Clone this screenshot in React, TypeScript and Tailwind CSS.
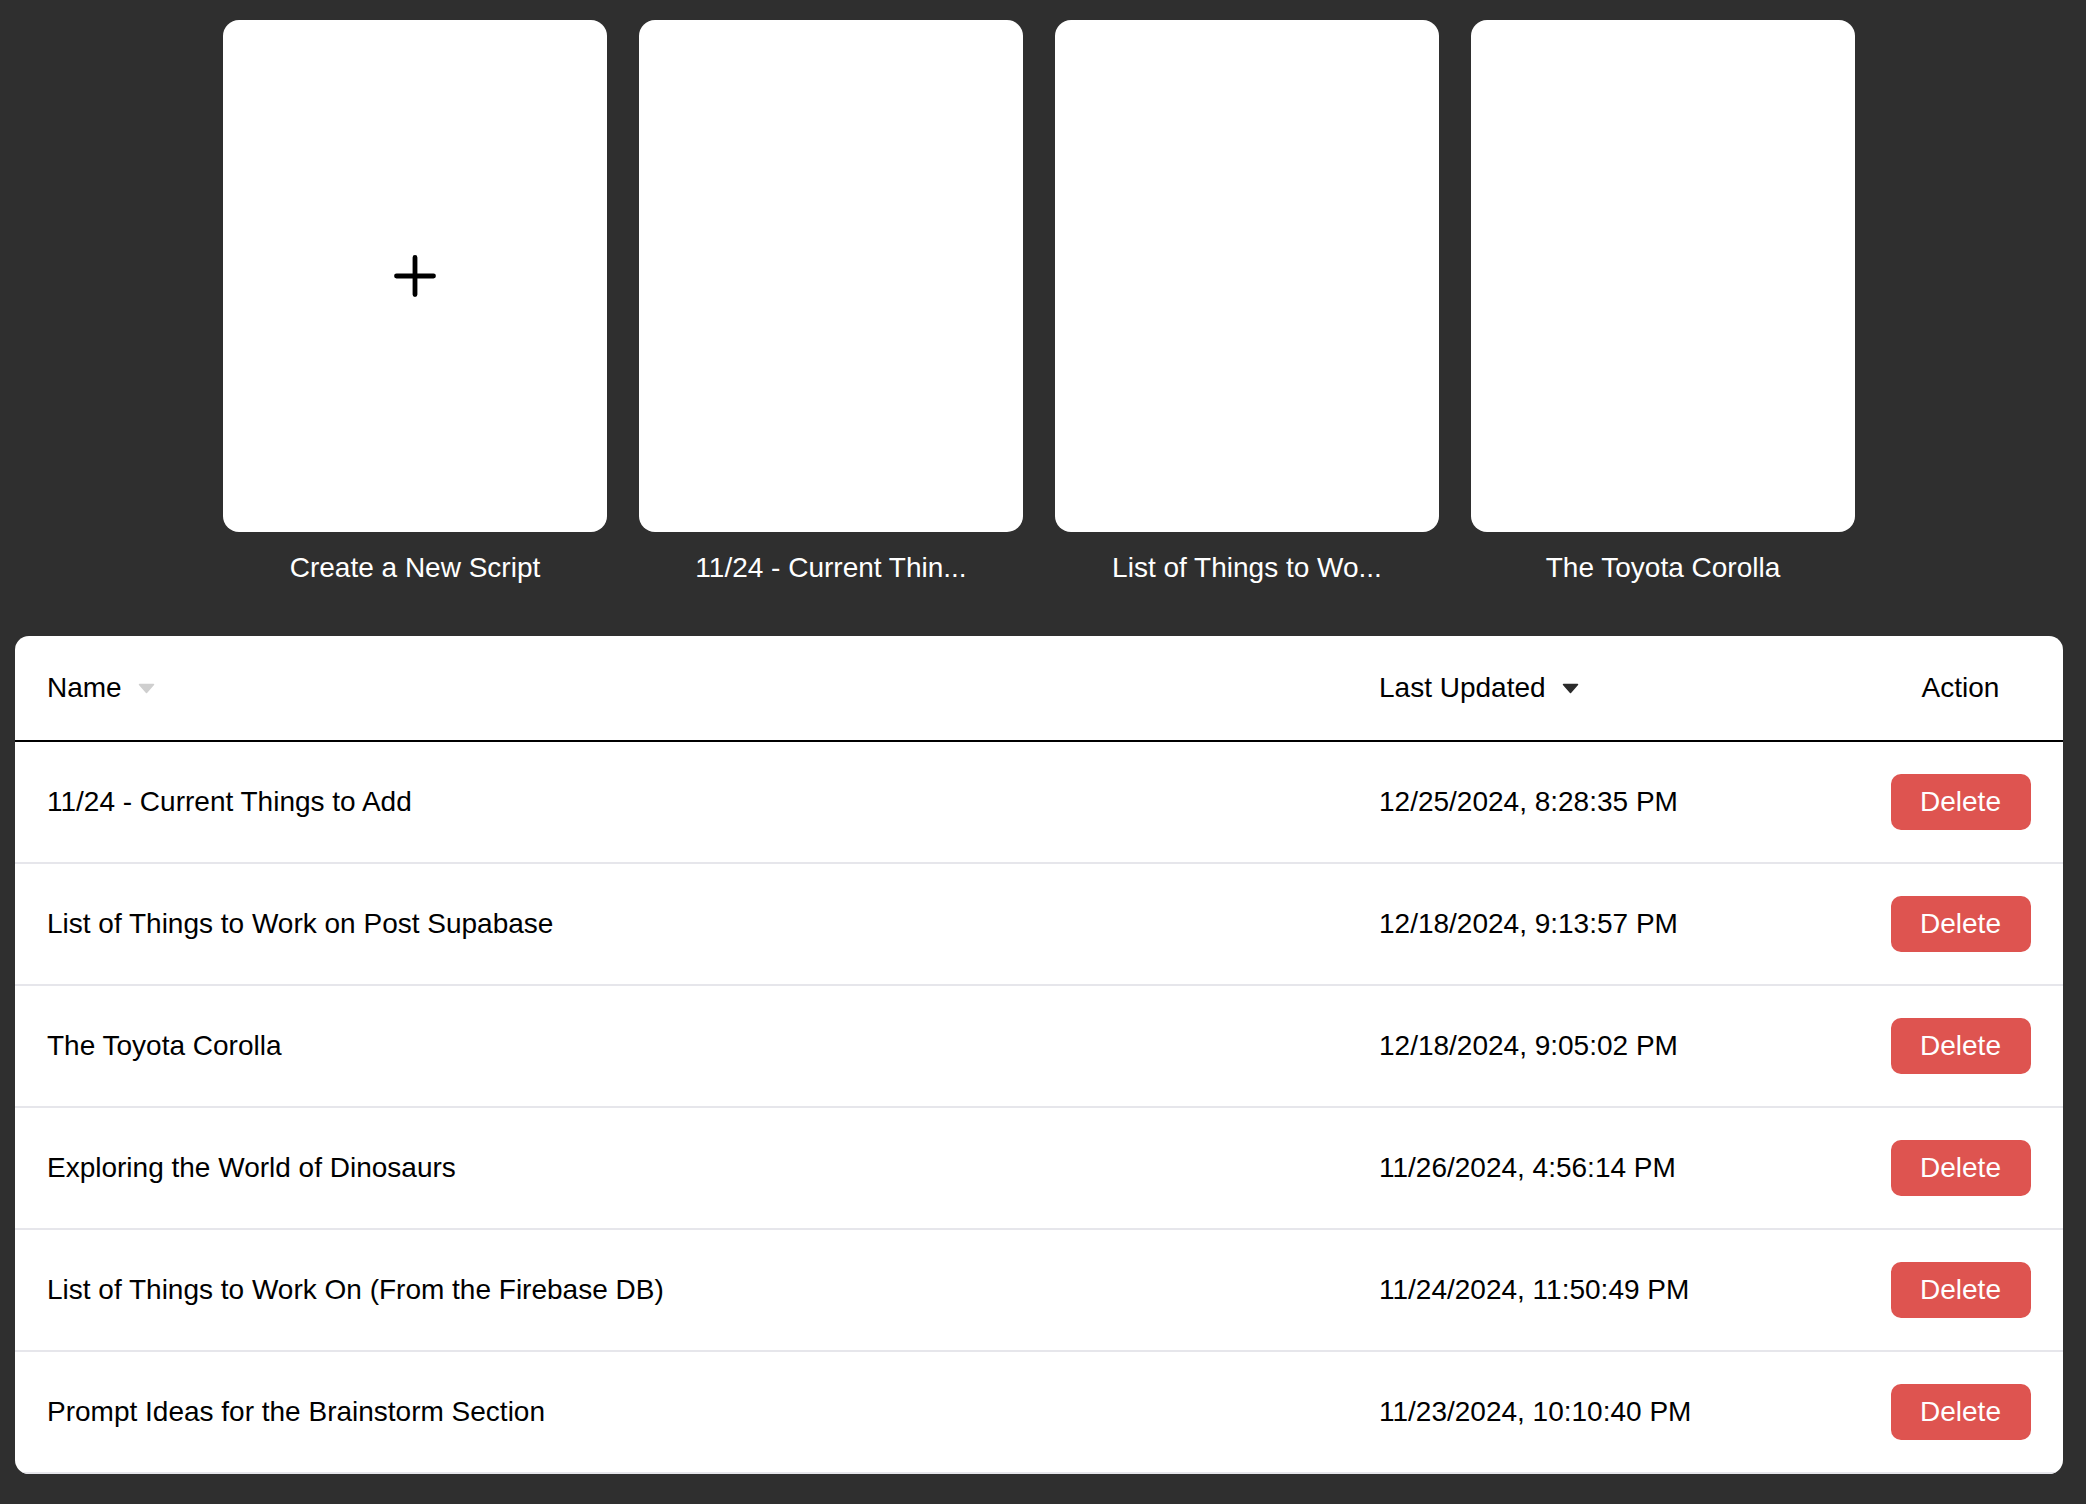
import { useState } from "react";

type Script = { id: number; name: string; updated: string };

const scripts: Script[] = [
  { id: 1, name: "11/24 - Current Things to Add", updated: "12/25/2024, 8:28:35 PM" },
  { id: 2, name: "List of Things to Work on Post Supabase", updated: "12/18/2024, 9:13:57 PM" },
  { id: 3, name: "The Toyota Corolla", updated: "12/18/2024, 9:05:02 PM" },
  { id: 4, name: "Exploring the World of Dinosaurs", updated: "11/26/2024, 4:56:14 PM" },
  { id: 5, name: "List of Things to Work On (From the Firebase DB)", updated: "11/24/2024, 11:50:49 PM" },
  { id: 6, name: "Prompt Ideas for the Brainstorm Section", updated: "11/23/2024, 10:10:40 PM" },
];

const truncate = (s: string, n = 20) => (s.length > n ? s.slice(0, n) + "..." : s);

function SortArrow({ active }: { active?: boolean }) {
  return (
    <svg width="17" height="11" viewBox="0 0 17 11" className="ml-4 shrink-0">
      <path
        d="M1.5 1.5 H15.5 L8.5 9.5 Z"
        fill={active ? "#2b2b2b" : "#cfcfcf"}
        stroke={active ? "#2b2b2b" : "#cfcfcf"}
        strokeWidth="1.5"
        strokeLinejoin="round"
      />
    </svg>
  );
}

function Card({ label, children }: { label: string; children?: React.ReactNode }) {
  return (
    <div className="flex flex-col items-center w-[384px]">
      <div className="w-[384px] h-[512px] bg-white rounded-2xl flex items-center justify-center cursor-pointer">
        {children}
      </div>
      <div className="mt-5 text-[28px] leading-8 text-white">{label}</div>
    </div>
  );
}

export default function App() {
  const [rows, setRows] = useState(scripts);

  return (
    <div
      className="min-h-screen bg-[#2f2f2f] pt-5 pl-[15px] pr-[23px] pb-[30px]"
      style={{ fontFamily: '"Liberation Sans", Arial, Helvetica, sans-serif' }}
    >
      <div className="flex justify-center gap-8">
        <Card label="Create a New Script">
          <svg width="42" height="42" viewBox="0 0 42 42">
            <path d="M21 2.5 V39.5 M2.5 21 H39.5" stroke="#000" strokeWidth="4.8" strokeLinecap="round" />
          </svg>
        </Card>
        {scripts.slice(0, 3).map((s) => (
          <Card key={s.id} label={truncate(s.name)} />
        ))}
      </div>

      <div className="mt-[52px] bg-white rounded-[14px] overflow-hidden text-[28px] text-black">
        <div className="grid grid-cols-[1332px_1fr_205px] h-[106px] items-center border-b-2 border-black">
          <div className="pl-8 flex items-center">
            Name
            <SortArrow />
          </div>
          <div className="pl-8 flex items-center">
            Last Updated
            <SortArrow active />
          </div>
          <div className="px-8 text-center">Action</div>
        </div>
        {rows.map((r) => (
          <div
            key={r.id}
            className="grid grid-cols-[1332px_1fr_205px] h-[122px] items-center border-b-2 border-[#e6e6eb]"
          >
            <div className="pl-8">{r.name}</div>
            <div className="pl-8">{r.updated}</div>
            <div className="px-8 flex justify-center">
              <button
                onClick={() => setRows(rows.filter((x) => x.id !== r.id))}
                className="w-[140px] h-14 rounded-[10px] bg-[#de5450] text-white text-[28px]"
              >
                Delete
              </button>
            </div>
          </div>
        ))}
      </div>
    </div>
  );
}
